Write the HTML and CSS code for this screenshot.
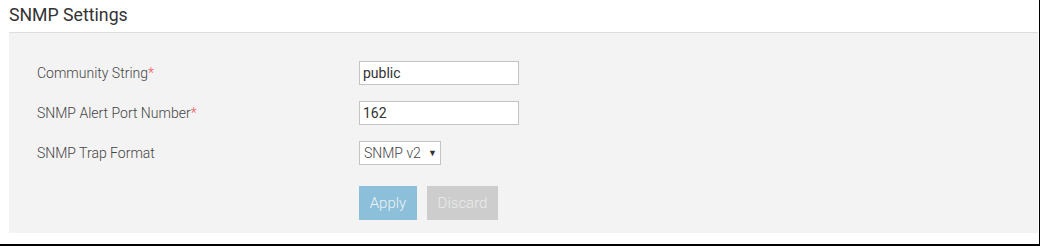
FILE: index.html
```html
<!DOCTYPE html>
<html lang="en">
<head>
    <meta charset="UTF-8">
    <title>SNMP Settings</title>
    <link rel="stylesheet" href="styles.css">
</head>
<body>
    <div class="frame">
        <h1 class="page-title">SNMP Settings</h1>
        <div class="panel">
            <form class="settings-form">
                <label class="field-label" for="community">Community String<span class="req">*</span></label>
                <div><input class="text-input" type="text" id="community" value="public"></div>

                <label class="field-label" for="alertPort">SNMP Alert Port Number<span class="req">*</span></label>
                <div><input class="text-input" type="text" id="alertPort" value="162"></div>

                <label class="field-label" for="trapFormat">SNMP Trap Format</label>
                <div>
                    <div class="select-box">
                        <span class="select-value">SNMP v2</span>
                        <span class="select-arrow">&#9660;</span>
                    </div>
                </div>

                <div class="actions">
                    <button type="button" class="btn btn-apply">Apply</button>
                    <button type="button" class="btn btn-discard">Discard</button>
                </div>
            </form>
        </div>
    </div>
</body>
</html>
```

FILE: styles.css
```css
html, body {
    margin: 0;
    padding: 0;
    background: #fff;
}

body {
    font-family: Roboto, "Liberation Sans", Arial, sans-serif;
    color: #333;
}

.frame {
    width: 1039px;
    height: 244px;
    border-right: 1px solid #000;
    border-bottom: 2px solid #000;
    box-sizing: content-box;
}

.page-title {
    margin: 0;
    height: 32px;
    padding-left: 9px;
    font-size: 17.7px;
    font-weight: 400;
    line-height: 31px;
    color: #333;
}

.panel {
    margin-left: 9px;
    width: 1029px;
    height: 201px;
    box-sizing: border-box;
    background: #f3f3f3;
    border-top: 1px solid #ddd;
    padding: 28px 0 0 28px;
}

.settings-form {
    display: grid;
    grid-template-columns: 322px auto;
    row-gap: 16px;
    align-items: center;
}

.field-label {
    font-size: 14px;
    font-weight: 300;
    color: #444;
    line-height: 24px;
}

.req {
    color: #f0525a;
}

.text-input {
    display: block;
    width: 160px;
    height: 24px;
    box-sizing: border-box;
    border: 1px solid #c4c4c4;
    background: #fff;
    padding: 0 3px;
    font-family: inherit;
    font-size: 14px;
    color: #333;
    outline: none;
}

.select-box {
    display: inline-flex;
    align-items: center;
    width: 82px;
    height: 24px;
    box-sizing: border-box;
    border: 1px solid #c4c4c4;
    background: #fff;
    padding: 0 0 0 4px;
    font-size: 14px;
    font-weight: 300;
    color: #444;
}

.select-arrow {
    font-size: 9px;
    color: #333;
    margin-left: 7px;
}

.actions {
    grid-column: 2;
    display: flex;
    gap: 10px;
    margin-top: 5px;
}

.btn {
    height: 34px;
    border: none;
    font-family: inherit;
    font-size: 15px;
    font-weight: 300;
    color: #eef2f5;
    padding: 0;
}

.btn-apply {
    width: 58px;
    background: #8bbfda;
}

.btn-discard {
    width: 71px;
    background: #cdcdcd;
    color: #ebebeb;
}
```
